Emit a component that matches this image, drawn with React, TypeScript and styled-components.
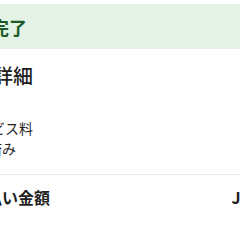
import React from "react";
import styled, { createGlobalStyle } from "styled-components";

const Global = createGlobalStyle`
  html, body { margin: 0; padding: 0; background: #ffffff; overflow: hidden; }
  body { font-family: "Noto Sans CJK JP", "Noto Sans", sans-serif; color: #222; }
`;

const Viewport = styled.div`
  width: 240px;
  height: 240px;
  overflow: hidden;
`;

const Page = styled.div`
  width: 360px;
  margin-left: -72px;
  display: flex;
  flex-direction: column;
  padding-top: 4px;
`;

const Banner = styled.div`
  height: 45px;
  background: #e3f2e5;
  display: flex;
  align-items: center;
  box-sizing: border-box;
`;

const BannerText = styled.span<{ $indent: number }>`
  font-size: 18px;
  font-weight: 700;
  color: #1c5b27;
  line-height: 1;
  margin-left: ${(p) => p.$indent}px;
`;

const Section = styled.div`
  display: flex;
  flex-direction: column;
  padding-top: 14px;
`;

const Title = styled.h2<{ $indent: number }>`
  margin: 0 0 0 ${(p) => p.$indent}px;
  font-size: 20px;
  font-weight: 500;
  line-height: 26px;
  color: #1f1f1f;
`;

const Rows = styled.div`
  display: flex;
  flex-direction: column;
  gap: 4px;
  margin-top: 31px;
`;

const RowText = styled.div<{ $indent: number }>`
  font-size: 14px;
  line-height: 16px;
  color: #1f1f1f;
  margin-left: ${(p) => p.$indent}px;
`;

const Divider = styled.hr`
  border: none;
  border-top: 1px solid #e8e8e8;
  margin: 18px 0 0;
`;

const TotalRow = styled.div`
  display: flex;
  justify-content: space-between;
  align-items: center;
  height: 44px;
`;

const TotalLabel = styled.span<{ $indent: number }>`
  font-size: 16px;
  font-weight: 700;
  color: #1f1f1f;
  margin-left: ${(p) => p.$indent}px;
`;

const TotalValue = styled.span`
  font-size: 16px;
  font-weight: 700;
  color: #1f1f1f;
  margin-right: -19px;
`;

export default function App() {
  return (
    <>
      <Global />
      <Viewport>
        <Page>
          <Banner>
            <BannerText $indent={-9}>お支払い完了</BannerText>
          </Banner>
          <Section>
            <Title $indent={-15}>お支払い詳細</Title>
            <Rows>
              <RowText $indent={35}>サービス料</RowText>
              <RowText $indent={32}>支払済み</RowText>
            </Rows>
          </Section>
          <Divider />
          <TotalRow>
            <TotalLabel $indent={26}>お支払い金額</TotalLabel>
            <TotalValue>JPY 1,100</TotalValue>
          </TotalRow>
        </Page>
      </Viewport>
    </>
  );
}
